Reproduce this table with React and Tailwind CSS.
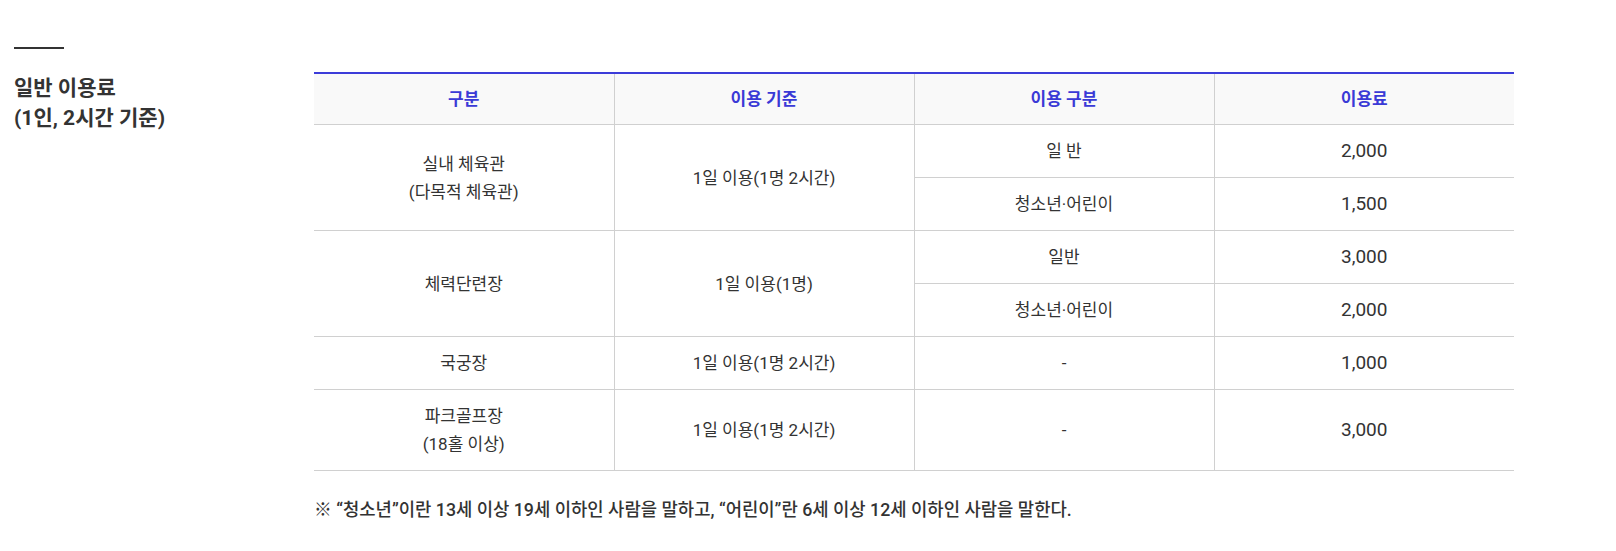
import React from 'react';

const rows = [
    { name: ['실내 체육관', '(다목적 체육관)'], basis: '1일 이용(1명 2시간)', subs: [['일 반', '2,000'], ['청소년·어린이', '1,500']] },
    { name: ['체력단련장'], basis: '1일 이용(1명)', subs: [['일반', '3,000'], ['청소년·어린이', '2,000']] },
    { name: ['국궁장'], basis: '1일 이용(1명 2시간)', subs: [['-', '1,000']] },
    { name: ['파크골프장', '(18홀 이상)'], basis: '1일 이용(1명 2시간)', subs: [['-', '3,000']] },
];

const FeePage = () => {
    const cell = 'border-b border-[#d0d0d0] py-3 text-center align-middle';

    return (
        <div className="min-h-screen bg-white text-[#333] flex items-start pt-[47px] pl-[14px]" style={{ fontFamily: 'Roboto, "Noto Sans CJK KR", sans-serif' }}>
            <div className="w-[300px] shrink-0">
                <div className="h-[2px] w-[50px] bg-[#333]"></div>
                <h2 className="mt-[24px] text-[21px] leading-[30px] font-bold text-[#333]">
                    일반 이용료<br />(1인, 2시간 기준)
                </h2>
            </div>

            <div className="pt-[25px]">
                <table className="w-[1200px] table-fixed border-collapse border-t-2 border-t-[#3c3cd9] text-[17px] leading-[28px]">
                    <thead>
                        <tr className="bg-[#f9f9f9]">
                            <th className="border-b border-[#d0d0d0] py-[11px] font-bold text-[#3a3ad6]">구분</th>
                            <th className="border-b border-l border-[#d0d0d0] py-[11px] font-bold text-[#3a3ad6]">이용 기준</th>
                            <th className="border-b border-l border-[#d0d0d0] py-[11px] font-bold text-[#3a3ad6]">이용 구분</th>
                            <th className="border-b border-l border-[#d0d0d0] py-[11px] font-bold text-[#3a3ad6]">이용료</th>
                        </tr>
                    </thead>
                    <tbody>
                        {rows.map((row, i) => (
                            <React.Fragment key={i}>
                                {row.subs.map((sub, j) => (
                                    <tr key={j}>
                                        {j === 0 && (
                                            <>
                                                <td rowSpan={row.subs.length} className={cell}>
                                                    {row.name.map((n, k) => <div key={k}>{n}</div>)}
                                                </td>
                                                <td rowSpan={row.subs.length} className={`${cell} border-l`}>{row.basis}</td>
                                            </>
                                        )}
                                        <td className={`${cell} border-l`}>{sub[0]}</td>
                                        <td className={`${cell} border-l text-[19px]`}>{sub[1]}</td>
                                    </tr>
                                ))}
                            </React.Fragment>
                        ))}
                    </tbody>
                </table>

                <p className="mt-[26px] text-[17.75px] leading-[26px] font-medium text-[#333]">
                    ※ “청소년”이란 13세 이상 19세 이하인 사람을 말하고, “어린이”란 6세 이상 12세 이하인 사람을 말한다.
                </p>
            </div>
        </div>
    );
};

export default FeePage;
